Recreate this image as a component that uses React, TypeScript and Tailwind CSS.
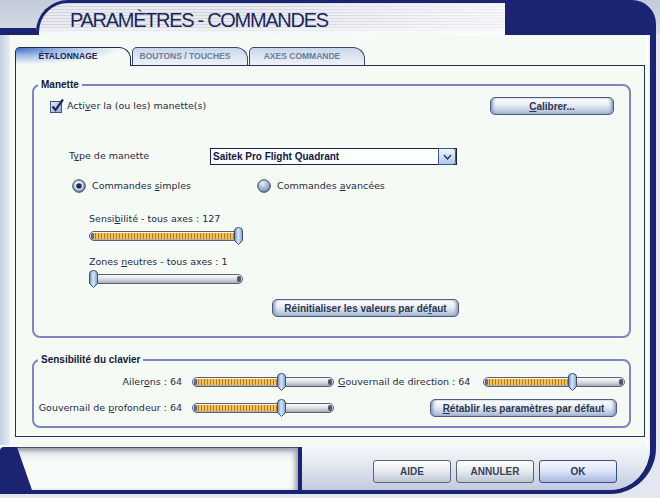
import { ReactNode } from 'react';

const bold = "font-['Liberation_Sans',Arial,sans-serif] font-bold";

function U({ children }: { children: ReactNode }) {
  return <span className="underline underline-offset-[1px]">{children}</span>;
}

function Btn({ children, className = '' }: { children: ReactNode; className?: string }) {
  return (
    <div
      className={`flex h-[18px] items-center justify-center rounded-[5px] border border-[#4d5b80] bg-[linear-gradient(180deg,#ffffff,#e6ecf4_45%,#a8b8d2)] text-[10px] text-[#2b3652] shadow-[inset_3px_0_3px_-1px_#8a9cbd,inset_-3px_0_3px_-1px_#8a9cbd] ${bold} ${className}`}
    >
      <span>{children}</span>
    </div>
  );
}

function Checkbox() {
  return (
    <svg width="13" height="13" viewBox="0 0 13 13" className="shrink-0 overflow-visible">
      <defs>
        <linearGradient id="cbg" x1="0" y1="0" x2="1" y2="1">
          <stop offset="0" stopColor="#e4edf8" />
          <stop offset="1" stopColor="#8eaad3" />
        </linearGradient>
      </defs>
      <rect x="0.5" y="1.5" width="11" height="11" fill="url(#cbg)" stroke="#44557a" />
      <path d="M2.5 6.5 L5.5 10 L13 -0.5" stroke="#1c2866" strokeWidth="2.2" fill="none" />
    </svg>
  );
}

function Radio({ checked = false }: { checked?: boolean }) {
  return (
    <svg width="14" height="14" viewBox="0 0 14 14" className="shrink-0">
      <defs>
        <radialGradient id="rdg" cx="40%" cy="30%" r="75%">
          <stop offset="0" stopColor="#eaf1f9" />
          <stop offset="1" stopColor="#6a82a6" />
        </radialGradient>
      </defs>
      <circle cx="7" cy="7" r="6.3" fill="url(#rdg)" stroke="#3a4966" strokeWidth="1" />
      {checked && (
        <>
          <circle cx="7" cy="7" r="3.8" fill="#ffffff" />
          <circle cx="7" cy="7" r="2.8" fill="#1d2a5e" />
        </>
      )}
    </svg>
  );
}

// frac: 0..1 position of the thumb along the track
function Slider({ frac, className = '' }: { frac: number; className?: string }) {
  return (
    <div className={`relative flex h-[18px] shrink-0 items-center ${className}`}>
      <div className="relative h-[10px] w-full overflow-hidden rounded-full border border-[#59607a] bg-[linear-gradient(180deg,#fbfbfb,#dcdee3_50%,#a6aab4)]">
        <div
          className="absolute inset-y-[1px] left-[2px] bg-[repeating-linear-gradient(90deg,#c4780a_0px,#c4780a_1px,#f2c45e_1px,#f2c45e_3px)]"
          style={{ width: `calc(${frac} * (100% - 9px) + 3px)` }}
        />
        <div className="absolute left-[1px] top-[1px] h-[6px] w-[3px] rounded-full bg-[#5a6888]" />
        <div className="absolute right-[1px] top-[1px] h-[6px] w-[4px] rounded-full bg-[#4a5570]" />
      </div>
      <svg
        width="9"
        height="18"
        viewBox="0 0 9 18"
        className="absolute top-0"
        style={{ left: `calc(${frac} * (100% - 9px))` }}
      >
        <defs>
          <linearGradient id="thg" x1="0" y1="0" x2="1" y2="0">
            <stop offset="0" stopColor="#6488bd" />
            <stop offset="0.45" stopColor="#d9e8f8" />
            <stop offset="1" stopColor="#7fa2d0" />
          </linearGradient>
        </defs>
        <path d="M0.5 4 Q0.5 0.5 4.5 0.5 Q8.5 0.5 8.5 4 L8.5 13.5 L4.5 17.5 L0.5 13.5 Z" fill="url(#thg)" stroke="#3d4f73" />
      </svg>
    </div>
  );
}

function TitleBar() {
  return (
    <div className="flex h-[35px] shrink-0 bg-[linear-gradient(180deg,#c2cadb,#d8dde8)]">
      <div className="flex w-[36px] flex-col justify-end">
        <div className="h-[7px] bg-[#1b2470]" />
      </div>
      <div className="flex flex-1 items-center rounded-tl-[32px] border-l-[3px] border-t-[3px] border-[#1b2470] bg-[linear-gradient(90deg,rgba(255,255,255,0)_45%,rgba(255,255,255,0.6)_100%),linear-gradient(180deg,rgba(255,255,255,0)_70%,rgba(255,255,255,0.85)_100%),repeating-linear-gradient(180deg,#d0d4df_0px,#d0d4df_1px,#e9ebf1_1px,#e9ebf1_3px)] pl-[31px] pt-[2px]">
        <span className="font-['Liberation_Sans',Arial,sans-serif] text-[20px] leading-none tracking-[-1.3px] text-[#1c2758]">
          PARAMÈTRES - COMMANDES
        </span>
      </div>
      <div className="w-[151px] rounded-tr-[24px] bg-[#1b2470]" />
      <div className="w-[4px]" />
    </div>
  );
}

function Tabs() {
  return (
    <div className="flex h-[18px] shrink-0 items-end gap-[1px]">
      <div
        className={`relative z-10 -mb-px flex h-[19px] w-[116px] items-center justify-center rounded-tl-[5px] rounded-tr-[12px] border-l border-r border-t border-[#1f2a4a] bg-[radial-gradient(ellipse_at_top_left,#3d6cc8_0%,#9db7e6_28%,#f5faf5_65%)] pr-[10px] pb-[1px] text-[8.5px] text-[#1c2650] ${bold}`}
      >
        ÉTALONNAGE
      </div>
      {['BOUTONS / TOUCHES', 'AXES COMMANDE'].map((t) => (
        <div
          key={t}
          className={`flex h-[18px] w-[116px] items-center justify-center rounded-tl-[5px] rounded-tr-[12px] border-l border-r border-t border-[#3b4766] bg-[linear-gradient(180deg,#c9d6ea,#eef3f8)] pr-[10px] text-[8.5px] text-[#6c7e9e] ${bold}`}
        >
          {t}
        </div>
      ))}
    </div>
  );
}

function ManetteGroup() {
  return (
    <fieldset className="rounded-[8px] border-2 border-[#7f86bf] pb-[19px]">
      <legend className={`ml-[4px] px-[3px] text-[10px] leading-[12px] text-[#111a3a] ${bold}`}>Manette</legend>

      <div className="mt-[6px] flex h-[18px] items-center pl-[16px] pr-[15px]">
        <Checkbox />
        <span className="ml-[4px] text-[9.5px]">
          Acti<U>v</U>er la (ou les) manette(s)
        </span>
        <Btn className="ml-auto w-[124px]">
          <U>C</U>alibrer...
        </Btn>
      </div>

      <div className="mt-[33px] flex h-[17px] items-center pl-[35px]">
        <span className="w-[141px] text-[9.5px]">
          T<U>y</U>pe de manette
        </span>
        <div className="flex h-[17px] w-[247px] items-center border border-[#18224a] bg-[#fcfefb]">
          <span className={`flex-1 pl-[2px] text-[10px] text-[#0e1846] ${bold}`}>Saitek Pro Flight Quadrant</span>
          <div className="flex h-[17px] w-[18px] items-center justify-center rounded-r-[3px] border border-[#3b5796] bg-[linear-gradient(180deg,#f1f6fc,#b2c6e6)]">
            <svg width="9" height="6" viewBox="0 0 9 6">
              <path d="M1 1 L4.5 5 L8 1" stroke="#1d2a66" strokeWidth="1.3" fill="none" />
            </svg>
          </div>
        </div>
      </div>

      <div className="mt-[14px] flex h-[14px] items-center pl-[38px]">
        <div className="flex w-[185px] items-center">
          <Radio checked />
          <span className="ml-[6px] text-[9.5px]">
            Commandes <U>s</U>imples
          </span>
        </div>
        <div className="flex items-center">
          <Radio />
          <span className="ml-[6px] text-[9.5px]">
            Commandes <U>a</U>vancées
          </span>
        </div>
      </div>

      <div className="mt-[20px] pl-[55px] text-[9.5px] leading-[12px]">
        Sensi<U>b</U>ilité - tous axes : 127
      </div>
      <Slider frac={1} className="ml-[55px] mt-[2px] w-[154px]" />

      <div className="mt-[11px] pl-[55px] text-[9.5px] leading-[12px]">
        Zones <U>n</U>eutres - tous axes : 1
      </div>
      <Slider frac={0} className="ml-[55px] mt-[2px] w-[154px]" />

      <Btn className="ml-[238px] mt-[11px] w-[187px]">
        Réinitialiser les valeurs par dé<U>f</U>aut
      </Btn>
    </fieldset>
  );
}

function ClavierGroup() {
  return (
    <fieldset className="mt-[16px] rounded-[8px] border-2 border-[#7f86bf] pb-[9px]">
      <legend className={`ml-[4px] px-[3px] text-[10px] leading-[12px] text-[#111a3a] ${bold}`}>
        Sensibilité du clavier
      </legend>

      <div className="mt-[7px] flex h-[18px] items-center">
        <span className="w-[148px] text-right text-[9.5px]">
          Ailer<U>o</U>ns : 64
        </span>
        <Slider frac={0.64} className="ml-[10px] w-[142px]" />
        <span className="ml-[4px] w-[135px] text-[9.5px]">
          <U>G</U>ouvernail de direction : 64
        </span>
        <Slider frac={0.64} className="ml-[10px] w-[142px]" />
      </div>

      <div className="mt-[8px] flex h-[18px] items-center">
        <span className="w-[148px] text-right text-[9.5px]">
          Gouvernail de <U>p</U>rofondeur : 64
        </span>
        <Slider frac={0.64} className="ml-[10px] w-[142px]" />
        <Btn className="ml-[96px] w-[187px]">
          <U>R</U>établir les paramètres par défaut
        </Btn>
      </div>
    </fieldset>
  );
}

function BottomBar() {
  const btn =
    "flex h-[23px] w-[78px] items-center justify-center rounded-[3px] border text-[10px] font-['Liberation_Sans',Arial,sans-serif] font-bold";
  return (
    <div className="flex h-[45px] shrink-0">
      <div className="flex w-[302px] pt-[2px]">
        <div className="flex flex-1 rounded-tl-[4px] bg-[#1b2470] pl-[17px] pr-[4px]">
          <div className="flex-1 border-t border-[#4a5060] bg-[linear-gradient(180deg,#9aa0ac_0px,#e6eaef_6px,#f8fcf8_14px)] shadow-[inset_-5px_0_5px_-2px_#9aa0b0] [clip-path:polygon(0_0,100%_0,100%_100%,15px_100%)]" />
        </div>
      </div>
      <div className="flex flex-1 items-start justify-end gap-[5px] bg-[linear-gradient(180deg,#f6f9fa,#e0e5ef_50%,#c3c9df)] pr-[33px] pt-[15px]">
        <div className={`${btn} border-[#5a6478] bg-[linear-gradient(180deg,#ffffff,#e8edf2_45%,#bcc6d4)] text-[#3a4458]`}>AIDE</div>
        <div className={`${btn} border-[#5a6478] bg-[linear-gradient(180deg,#ffffff,#e8edf2_45%,#bcc6d4)] text-[#3a4458]`}>ANNULER</div>
        <div className={`${btn} border-[#3a4a9a] bg-[linear-gradient(180deg,#f4f7fd,#dfe6f6_45%,#a9b7e0)] text-[#2c3660]`}>OK</div>
      </div>
    </div>
  );
}

export default function App() {
  return (
    <div className="flex h-[498px] w-[660px] flex-col overflow-hidden bg-[#e3e7ef] font-['DejaVu_Sans',sans-serif] text-[#1f2b4b]">
      <TitleBar />
      <div className="mr-[4px] flex min-h-0 flex-1 flex-col overflow-hidden rounded-br-[46px] border-b-[4px] border-r-[6px] border-[#1b2470] bg-[#f5faf5]">
        <div className="flex min-h-0 flex-1">
          <div className="w-[10px] bg-[linear-gradient(90deg,#c6d0e4,#e8edf5)]" />
          <div className="flex min-w-0 flex-1 flex-col pb-[8px] pl-[5px] pt-[12px]">
            <Tabs />
            <div className="flex flex-1 flex-col border border-[#25324d] pl-[16px] pr-[13px] pt-[13px]">
              <ManetteGroup />
              <ClavierGroup />
            </div>
          </div>
          <div className="w-[5px] bg-[linear-gradient(90deg,#f5faf5,#ffffff_60%,#dfe3ec)]" />
        </div>
        <BottomBar />
      </div>
      <div className="h-[4px] shrink-0" />
    </div>
  );
}
